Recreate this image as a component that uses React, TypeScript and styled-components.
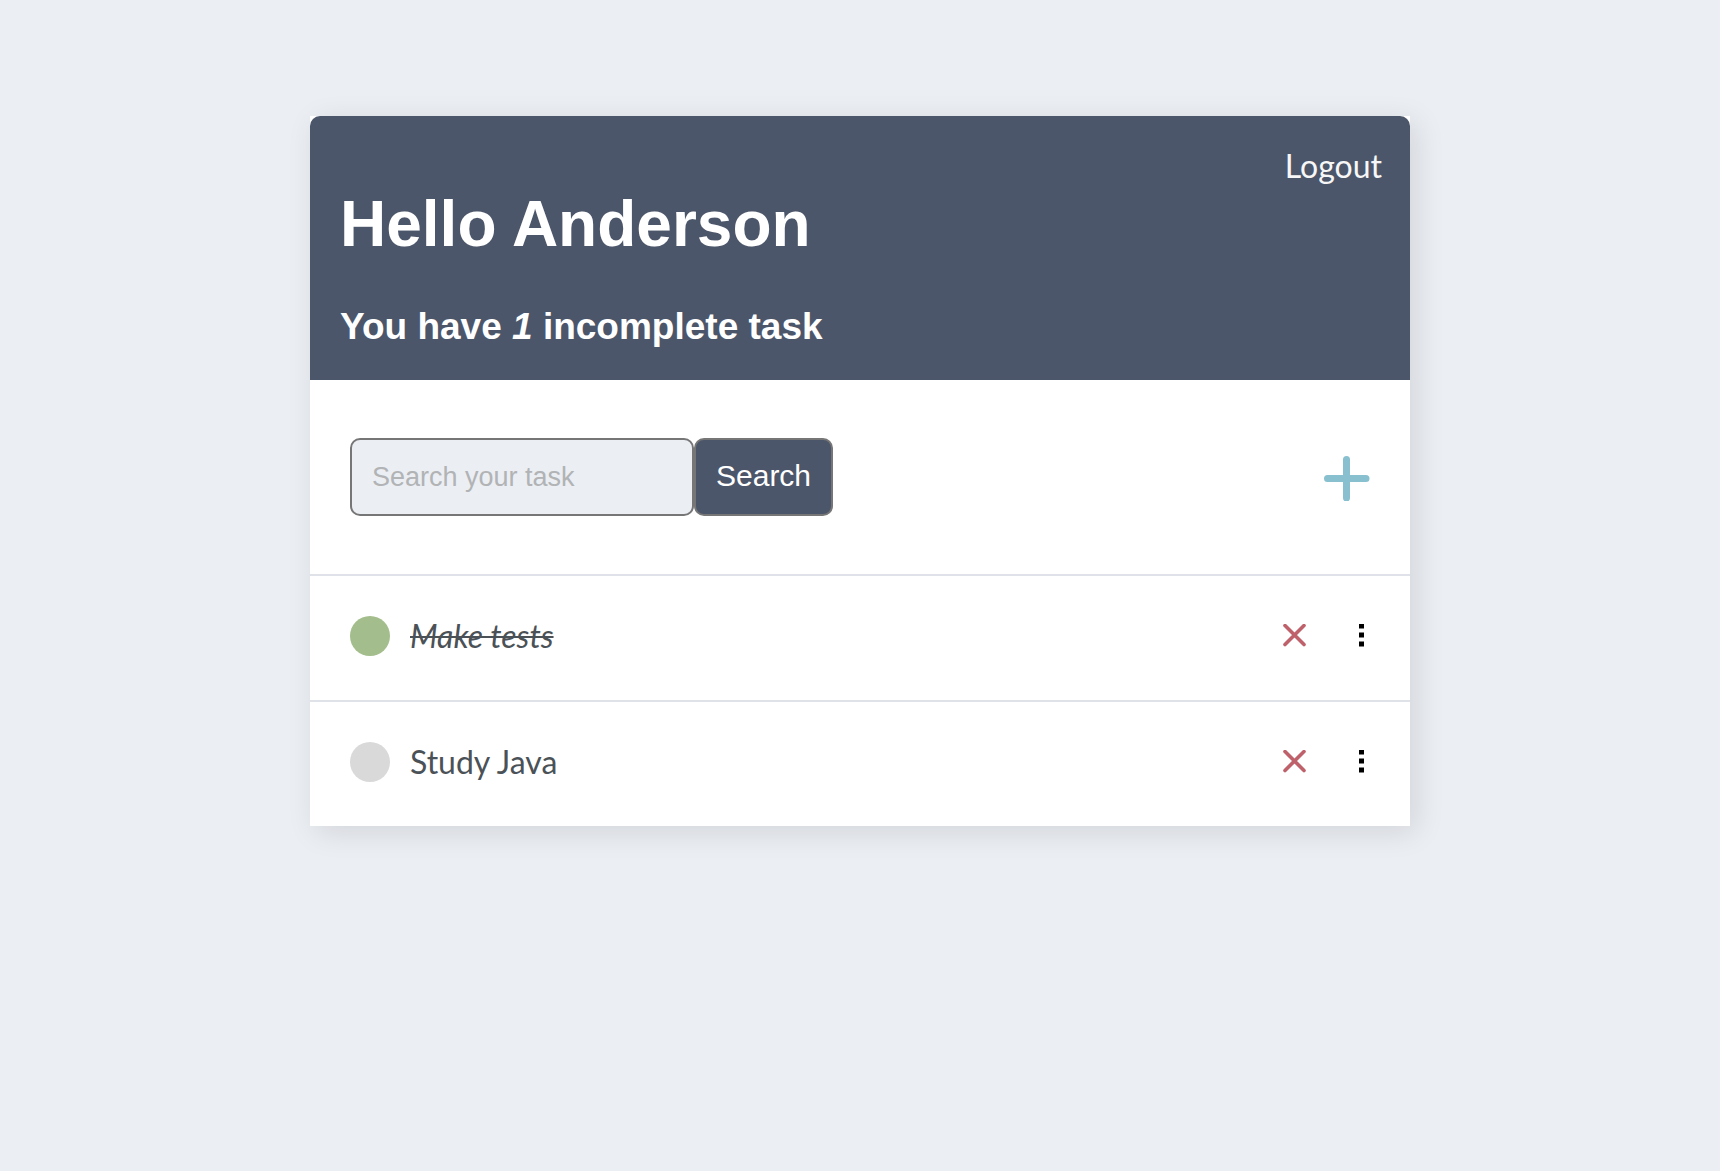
import React, { useState } from 'react';
import styled, { createGlobalStyle } from 'styled-components';

const GlobalStyle = createGlobalStyle`
  * { box-sizing: border-box; margin: 0; padding: 0; }
  body { background: #ebeef3; color: #4b5257; font: 32px/44px Lato, sans-serif; }
`;

const Page = styled.main`
  display: flex;
  justify-content: center;
  padding: 116px 32px;
`;

const Card = styled.section`
  width: 100%;
  max-width: 1100px;
  background: #fff;
  box-shadow: 6px 6px 28px rgba(0, 0, 0, 0.11);
`;

const Header = styled.header`
  display: grid;
  padding: 30px 28px 30px 30px;
  background: #4c566a;
  border-radius: 10px 10px 0 0;
  color: #fff;
  font-family: 'Liberation Sans', Arial, sans-serif;
`;

const Logout = styled.a`
  justify-self: end;
  color: #f7f7f7;
  font-family: Lato, sans-serif;
  line-height: 40px;
  text-decoration: none;
`;

const Greeting = styled.h1`
  font-size: 64px;
  line-height: 76px;
`;

const Summary = styled.h2`
  margin-top: 42px;
  font-size: 37px;
  line-height: 46px;
`;

const Toolbar = styled.div`
  display: flex;
  align-items: center;
  justify-content: space-between;
  padding: 58px 40px;
`;

const SearchForm = styled.form`
  display: flex;
`;

const SearchInput = styled.input`
  width: 344px;
  height: 78px;
  padding: 0 20px;
  border: 2px solid #767676;
  border-radius: 10px;
  background: #ebeef3;
  color: #4b5257;
  font: 27px 'Liberation Sans', Arial, sans-serif;
  &::placeholder { color: #b1b3b5; opacity: 1; }
`;

const SearchButton = styled.button`
  height: 78px;
  padding: 0 20px 2px;
  border: 2px solid #767676;
  border-radius: 10px;
  background: #4c566a;
  color: #fff;
  font: 30px 'Liberation Sans', Arial, sans-serif;
  cursor: pointer;
`;

const IconButton = styled.button`
  display: flex;
  border: 0;
  background: none;
  color: ${(p) => p.color};
  cursor: pointer;
`;

const Tasks = styled.ul`
  list-style: none;
`;

const Task = styled.li`
  display: flex;
  align-items: center;
  gap: 20px;
  padding: 38px 36px 42px 40px;
  border-top: 2px solid #dfe3e9;
`;

const Toggle = styled.input`
  appearance: none;
  flex: none;
  width: 40px;
  height: 40px;
  border-radius: 50%;
  background: #d9d9d9;
  cursor: pointer;
  &:checked { background: #a3be8c; }
`;

const TaskName = styled.label<{ $done: boolean }>`
  flex: 1;
  font-style: ${(p) => (p.$done ? 'italic' : 'normal')};
  text-decoration: ${(p) => (p.$done ? 'line-through 2px' : 'none')};
`;

const Actions = styled.div`
  display: flex;
  align-items: center;
  gap: 44px;
`;

const PlusIcon = () => (
  <svg width="48" height="48" viewBox="0 0 48 48" stroke="currentColor" strokeWidth="7" strokeLinecap="round" aria-hidden="true">
    <path d="M24.5 6.500V45M5.500 25.500H44" />
  </svg>
);

const CloseIcon = () => (
  <svg width="24" height="24" viewBox="0 0 24 24" stroke="currentColor" strokeWidth="3.600" strokeLinecap="round" aria-hidden="true">
    <path d="M3 1.500L22 20.500M22 1.500L3 20.500" />
  </svg>
);

const DotsIcon = () => (
  <svg width="24" height="24" viewBox="0 0 24 24" fill="currentColor" aria-hidden="true">
    <path d="M9 -0.500h5v5h-5zM9 8.500h5v5h-5zM9 17.500h5v5h-5z" overflow="visible" />
  </svg>
);

const initialTasks = [
  { id: 1, name: 'Make tests', done: true },
  { id: 2, name: 'Study Java', done: false },
];

export default function App() {
  const [tasks, setTasks] = useState(initialTasks);
  const open = tasks.filter((t) => !t.done).length;
  const toggle = (id: number) =>
    setTasks(tasks.map((t) => (t.id === id ? { ...t, done: !t.done } : t)));

  return (
    <Page>
      <GlobalStyle />
      <Card>
        <Header>
          <Logout href="#">Logout</Logout>
          <Greeting>Hello Anderson</Greeting>
          <Summary>
            You have <em>{open}</em> incomplete {open === 1 ? 'task' : 'tasks'}
          </Summary>
        </Header>
        <Toolbar>
          <SearchForm onSubmit={(e) => e.preventDefault()}>
            <SearchInput placeholder="Search your task" aria-label="Search your task" />
            <SearchButton>Search</SearchButton>
          </SearchForm>
          <IconButton color="#88c0d0" aria-label="Add task"><PlusIcon /></IconButton>
        </Toolbar>
        <Tasks>
          {tasks.map((t) => (
            <Task key={t.id}>
              <Toggle type="checkbox" id={`task-${t.id}`} checked={t.done} onChange={() => toggle(t.id)} />
              <TaskName htmlFor={`task-${t.id}`} $done={t.done}>{t.name}</TaskName>
              <Actions>
                <IconButton color="#bf616a" aria-label={`Delete ${t.name}`}
                  onClick={() => setTasks(tasks.filter((o) => o.id !== t.id))}><CloseIcon /></IconButton>
                <IconButton color="#000" aria-label={`Options for ${t.name}`}><DotsIcon /></IconButton>
              </Actions>
            </Task>
          ))}
        </Tasks>
      </Card>
    </Page>
  );
}
